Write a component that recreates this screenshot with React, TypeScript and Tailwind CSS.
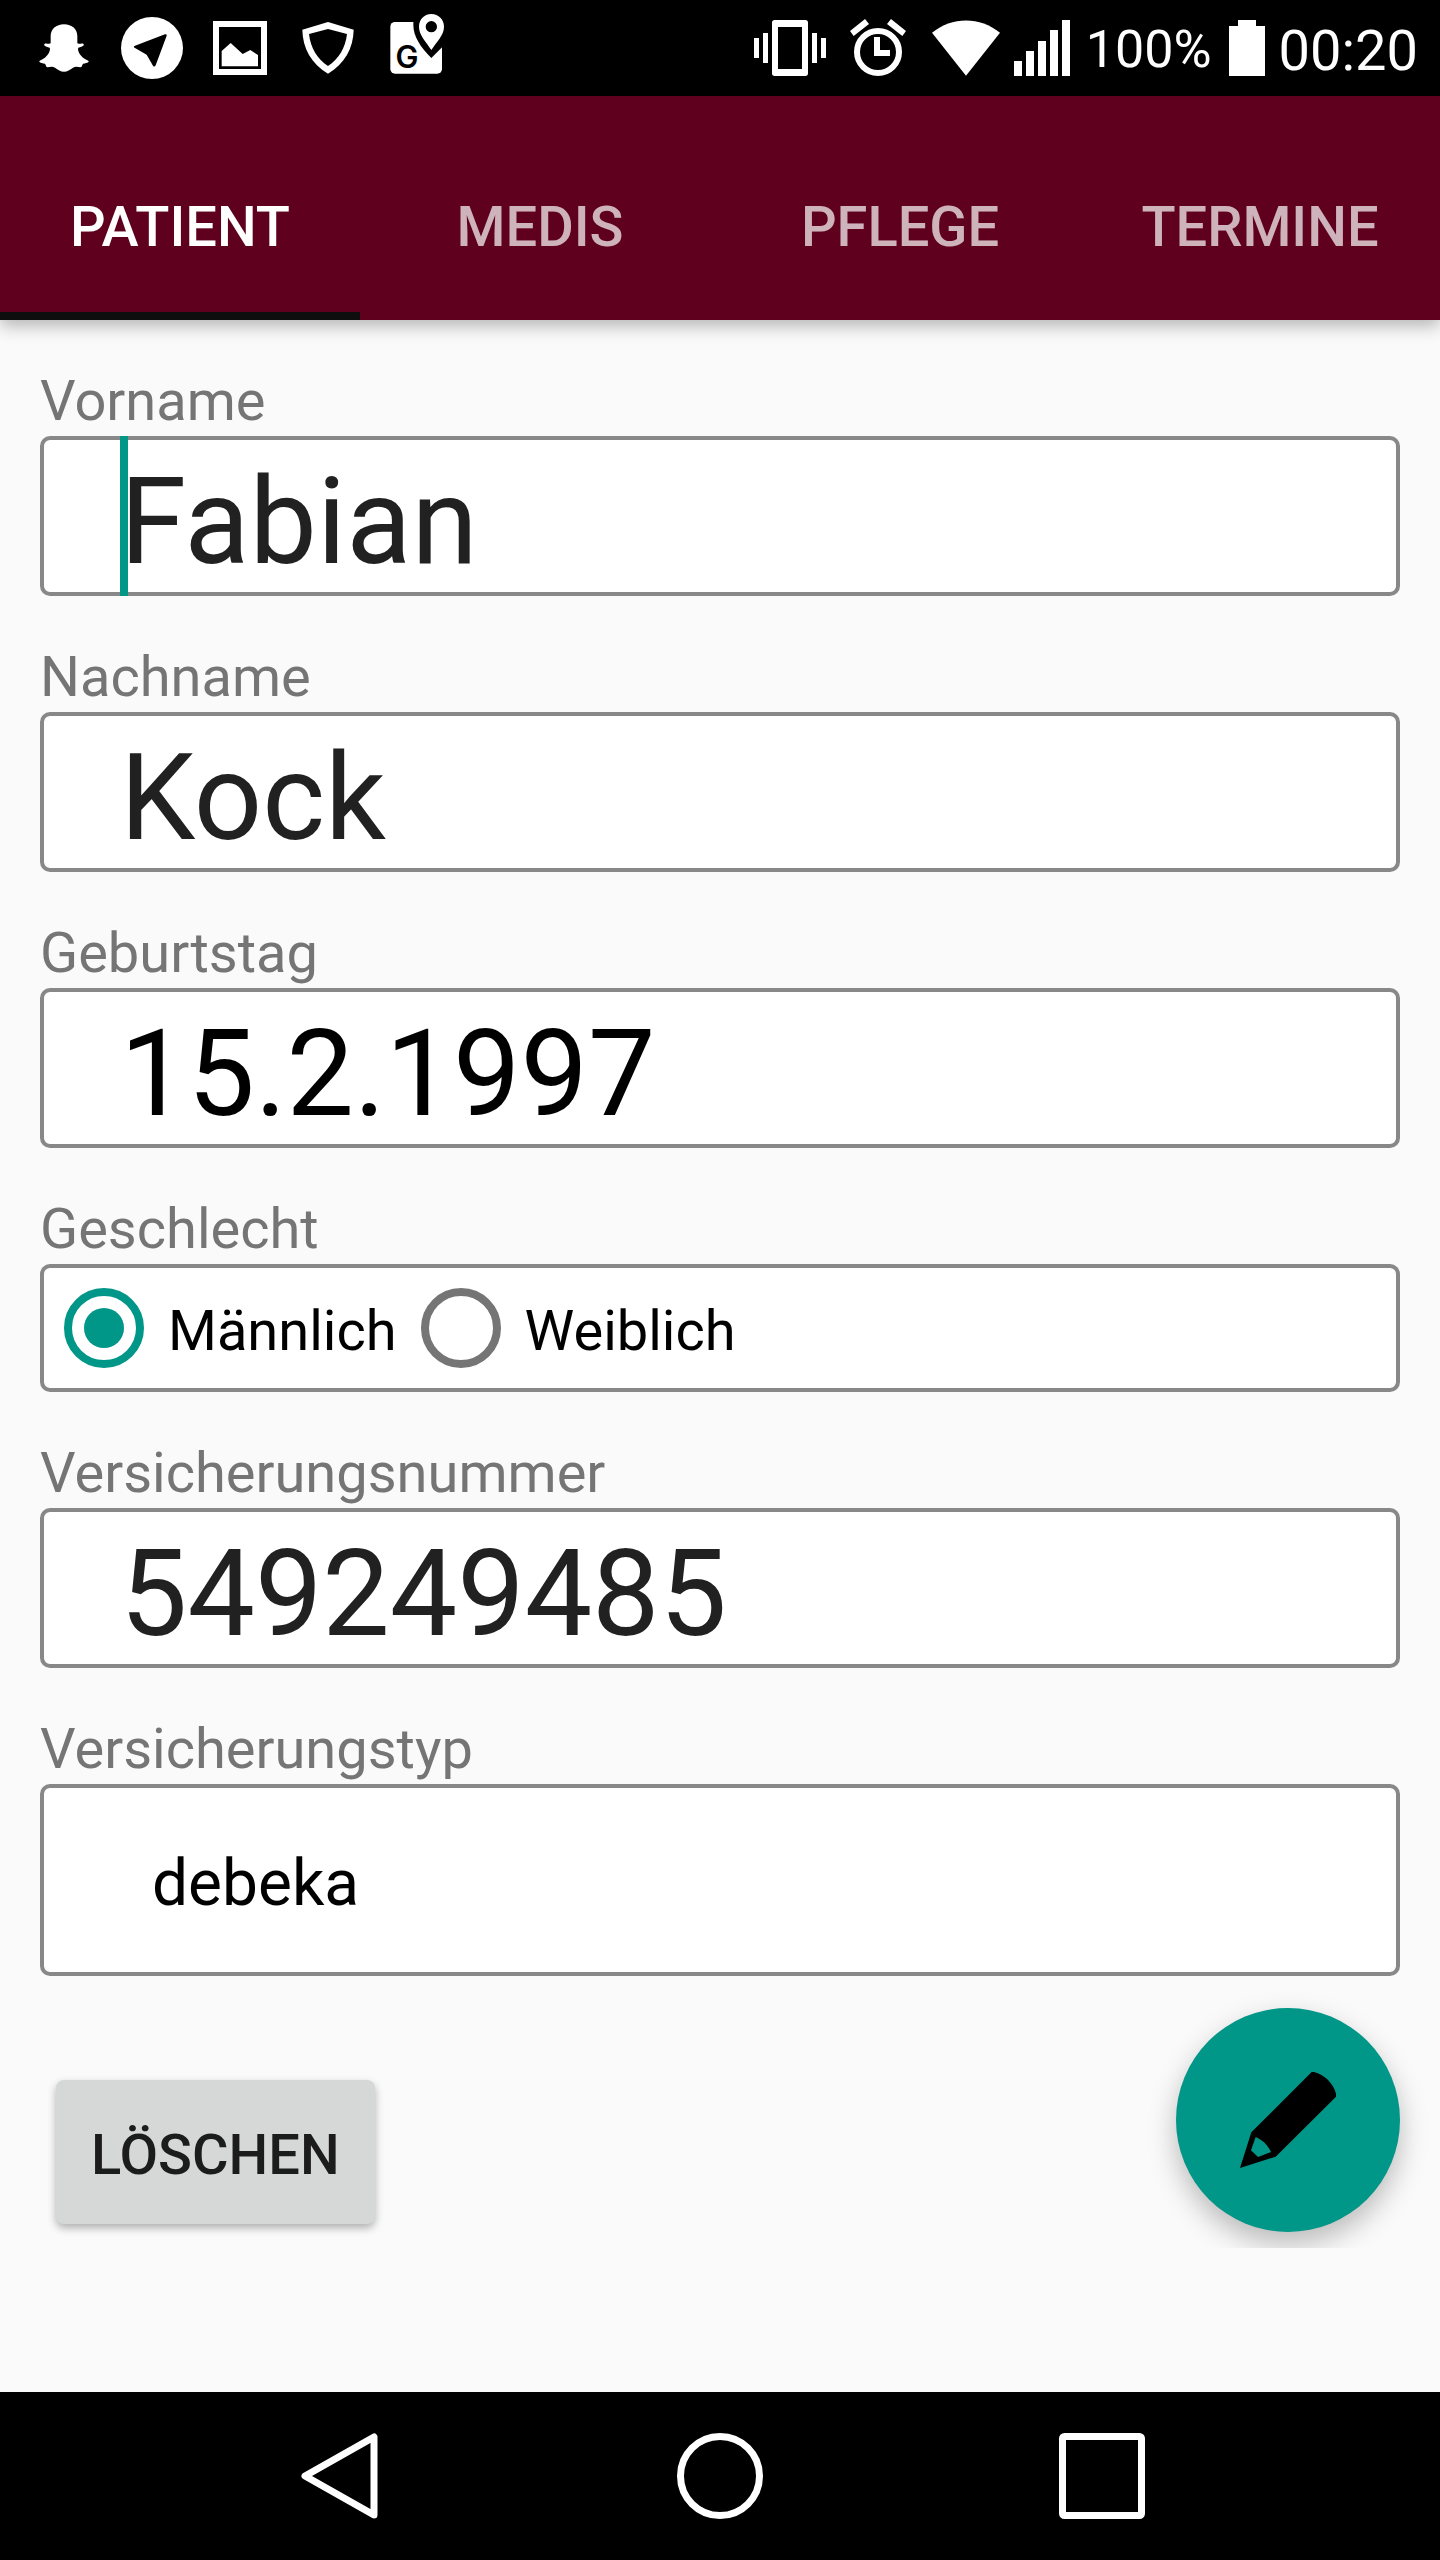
import React, { useState } from "react";

const labelClass = "block text-[56px] leading-[70px] text-[#757575]";
const boxClass =
  "block w-full rounded-[10px] border-4 border-[#888888] bg-white outline-none";

function StatusBar() {
  return (
    <div className="flex h-24 items-center justify-between bg-black pl-7 pr-[22px] text-white">
      <div className="flex items-center gap-4">
        <svg className="size-18" viewBox="84 36 216 216" fill="#fff" aria-hidden="true">
          <path d="M192 73C168 73 152 88 152 108V130C148 133 139 129 134 131C130 135 134 139 149 143C153 150 144 172 119 182C116 186 120 188 135 191C138 195 137 200 142 202C150 201 158 199 165 203C174 209 182 215 192 215C202 215 210 209 219 203C226 199 234 201 242 202C247 200 246 195 249 191C264 188 268 186 265 182C240 172 231 150 235 143C250 139 254 135 250 131C245 129 236 133 232 130V108C232 88 216 73 192 73Z" />
        </svg>
        <svg className="size-18" viewBox="348 36 216 216" aria-hidden="true">
          <circle cx="456" cy="144" r="93" fill="#fff" />
          <path d="M495 103Q501 102 500 107L467 196Q463 203 459 197L440 164L405 144Q398 140 405 137Z" fill="#000" />
        </svg>
        <svg className="size-18" viewBox="612 36 216 216" fill="#fff" aria-hidden="true">
          <path fillRule="evenodd" d="M639 63H801V225H639ZM657 81V207H783V81Z" />
          <path d="M665 153L692 129L728 162L751 150L774 165V199H665Z" />
        </svg>
        <svg className="size-18" viewBox="876 36 216 216" fill="#fff" aria-hidden="true">
          <path
            fillRule="evenodd"
            d="M984 66L1061 89C1060 145 1034 190 984 221C934 190 908 145 907 89ZM984 87L927 102C932 145 952 177 984 198C1016 177 1036 145 1041 102Z"
          />
        </svg>
        <svg className="size-18" viewBox="1140 36 216 216" aria-hidden="true">
          <rect x="1171" y="66" width="155" height="155" rx="14" fill="#fff" />
          <path d="M1240 60V75C1240 110 1262 142 1294 174L1327 141V60Z" fill="#000" />
          <path
            fill="#fff"
            fillRule="evenodd"
            d="M1294 42C1272 42 1257 59 1257 80C1257 106 1279 126 1294 150C1309 126 1332 106 1332 80C1332 59 1316 42 1294 42ZM1294 63A17 17 0 1 1 1294 97A17 17 0 1 1 1294 63Z"
          />
          <text x="1221" y="203" textAnchor="middle" className="font-['Inter',sans-serif]" fontSize="92" fontWeight="600" fill="#000">
            G
          </text>
        </svg>
      </div>
      <div className="flex items-center">
        <svg className="size-18" viewBox="72 36 216 216" fill="#fff" aria-hidden="true">
          <path
            fillRule="evenodd"
            d="M134 60H226Q234 60 234 68V220Q234 228 226 228H134Q126 228 126 220V68Q126 60 134 60ZM144 81V207H216V81Z"
          />
          <path d="M72 114H87V174H72ZM99 99H114V189H99ZM246 99H261V189H246ZM273 114H288V174H273Z" />
        </svg>
        <svg className="ml-6 h-18 w-14" viewBox="360 36 168 216" fill="#fff" aria-hidden="true">
          <circle cx="444" cy="156" r="63" fill="none" stroke="#fff" strokeWidth="18" />
          <path d="M432 111H450V150H480V168H432ZM360 93L405 57L417 72L371 108ZM528 93L483 57L471 72L517 108Z" />
        </svg>
        <svg className="ml-6.5 h-18 w-17" viewBox="605 36 206 216" fill="#fff" aria-hidden="true">
          <path d="M708 228L605 98C665 48 751 48 811 98Z" />
        </svg>
        <svg className="ml-3.5 h-18 w-14" viewBox="852 36 168 216" fill="#fff" aria-hidden="true">
          <path d="M852 183H876V228H852ZM888 153H912V228H888ZM924 123H948V228H924ZM960 90H984V228H960ZM996 60H1020V228H996Z" />
        </svg>
        <span className="ml-4 pt-1 text-[52px] leading-[64px]">100%</span>
        <svg className="ml-[17px] h-18 w-9" viewBox="447 36 108 216" fill="#fff" aria-hidden="true">
          <path d="M474 60H528V78H555V228H447V78H474Z" />
        </svg>
        <span className="ml-3.5 pt-1.5 text-[56px] leading-[64px]">00:20</span>
      </div>
    </div>
  );
}

const tabs = ["PATIENT", "MEDIS", "PFLEGE", "TERMINE"];

function TabBar() {
  const [active, setActive] = useState("PATIENT");
  return (
    <header className="relative z-10 bg-[#5e001e] pt-8 shadow-[0_6px_16px_rgba(0,0,0,0.28)]">
      <div role="tablist" className="grid grid-cols-4">
        {tabs.map((tab) => (
          <button
            key={tab}
            type="button"
            role="tab"
            aria-selected={tab === active}
            onClick={() => setActive(tab)}
            className={
              tab === active
                ? "h-48 border-b-8 border-[#0e0e0e] pt-3.5 text-[56px] font-medium text-white"
                : "h-48 border-b-8 border-transparent pt-3.5 text-[56px] font-medium text-white/70"
            }
          >
            {tab}
          </button>
        ))}
      </div>
    </header>
  );
}

type FieldProps = { id: string; label: string; value: string; dark?: boolean; caret?: boolean };

function TextField({ id, label, value, dark, caret }: FieldProps) {
  return (
    <div>
      <label htmlFor={id} className={labelClass}>
        {label}
      </label>
      <div className="relative">
        <input
          id={id}
          type="text"
          defaultValue={value}
          className={`${boxClass} h-40 pl-19 pt-3 text-[120px] ${dark ? "text-black" : "text-[#212121]"}`}
        />
        {caret && <span className="absolute inset-y-0 left-20 w-2 bg-[#009688]" />}
      </div>
    </div>
  );
}

function Radio({ label, checked }: { label: string; checked?: boolean }) {
  return (
    <label className="flex items-center gap-6 text-[56px] leading-[70px] text-black">
      <input
        type="radio"
        name="geschlecht"
        defaultChecked={checked}
        className="grid size-20 appearance-none place-content-center rounded-full border-8 border-[#757575] before:size-10 before:rounded-full before:content-[''] checked:border-[#009688] checked:before:bg-[#009688]"
      />
      <span className="pt-1.5">{label}</span>
    </label>
  );
}

export default function App() {
  return (
    <div className="flex min-h-screen flex-col bg-[#fafafa] font-['Roboto',sans-serif]">
      <StatusBar />
      <TabBar />
      <main className="relative overflow-hidden px-10 pb-6 pt-[46px]">
        <form className="flex flex-col gap-[46px]" onSubmit={(e) => e.preventDefault()}>
          <TextField id="vorname" label="Vorname" value="Fabian" caret />
          <TextField id="nachname" label="Nachname" value="Kock" />
          <TextField id="geburtstag" label="Geburtstag" value="15.2.1997" dark />
          <fieldset>
            <legend className={labelClass}>Geschlecht</legend>
            <div className={`${boxClass} h-32`}>
              <div className="flex h-full items-center gap-6 pl-5">
                <Radio label="Männlich" checked />
                <Radio label="Weiblich" />
              </div>
            </div>
          </fieldset>
          <TextField id="versicherungsnummer" label="Versicherungsnummer" value="549249485" />
          <div>
            <label htmlFor="versicherungstyp" className={labelClass}>
              Versicherungstyp
            </label>
            <select
              id="versicherungstyp"
              defaultValue="debeka"
              className={`${boxClass} h-48 appearance-none pl-27 pt-2 text-[64px] text-black`}
            >
              <option value="debeka">debeka</option>
            </select>
          </div>
          <button
            type="button"
            className="ml-4 mt-[58px] h-36 self-start rounded-lg bg-[#d6d8d7] px-[35px] pt-1.5 text-[56px] font-medium text-[#1c1c1c] shadow-[0_4px_8px_rgba(0,0,0,0.3)]"
          >
            LÖSCHEN
          </button>
        </form>
        <button
          type="button"
          aria-label="Bearbeiten"
          className="absolute bottom-4 right-10 flex size-56 items-center justify-center rounded-full bg-[#009688] shadow-[0_12px_28px_rgba(0,0,0,0.26)]"
        >
          <svg className="size-24" viewBox="300 366 288 288" aria-hidden="true">
            <path
              fillRule="evenodd"
              d="M515 366H522C553 373 580 400 588 431V440L407 620L300 654L334 547ZM347 561L333 601L354 621L393 606C384 585 368 570 347 561Z"
            />
          </svg>
        </button>
      </main>
      <nav className="mt-auto flex h-42 items-center justify-evenly bg-black">
        <button type="button" aria-label="Zurück">
          <svg className="size-[86px]" viewBox="0 0 86 86" fill="none" stroke="#fff" strokeWidth="7" strokeLinejoin="round" aria-hidden="true">
            <path d="M78 4V82L9 43Z" />
          </svg>
        </button>
        <button type="button" aria-label="Startseite">
          <svg className="size-[86px]" viewBox="0 0 86 86" fill="none" stroke="#fff" strokeWidth="7" aria-hidden="true">
            <circle cx="43" cy="43" r="39.5" />
          </svg>
        </button>
        <button type="button" aria-label="Übersicht">
          <svg className="size-[86px]" viewBox="0 0 86 86" fill="none" stroke="#fff" strokeWidth="7" aria-hidden="true">
            <rect x="3.5" y="3.5" width="79" height="79" rx="2" />
          </svg>
        </button>
      </nav>
    </div>
  );
}
